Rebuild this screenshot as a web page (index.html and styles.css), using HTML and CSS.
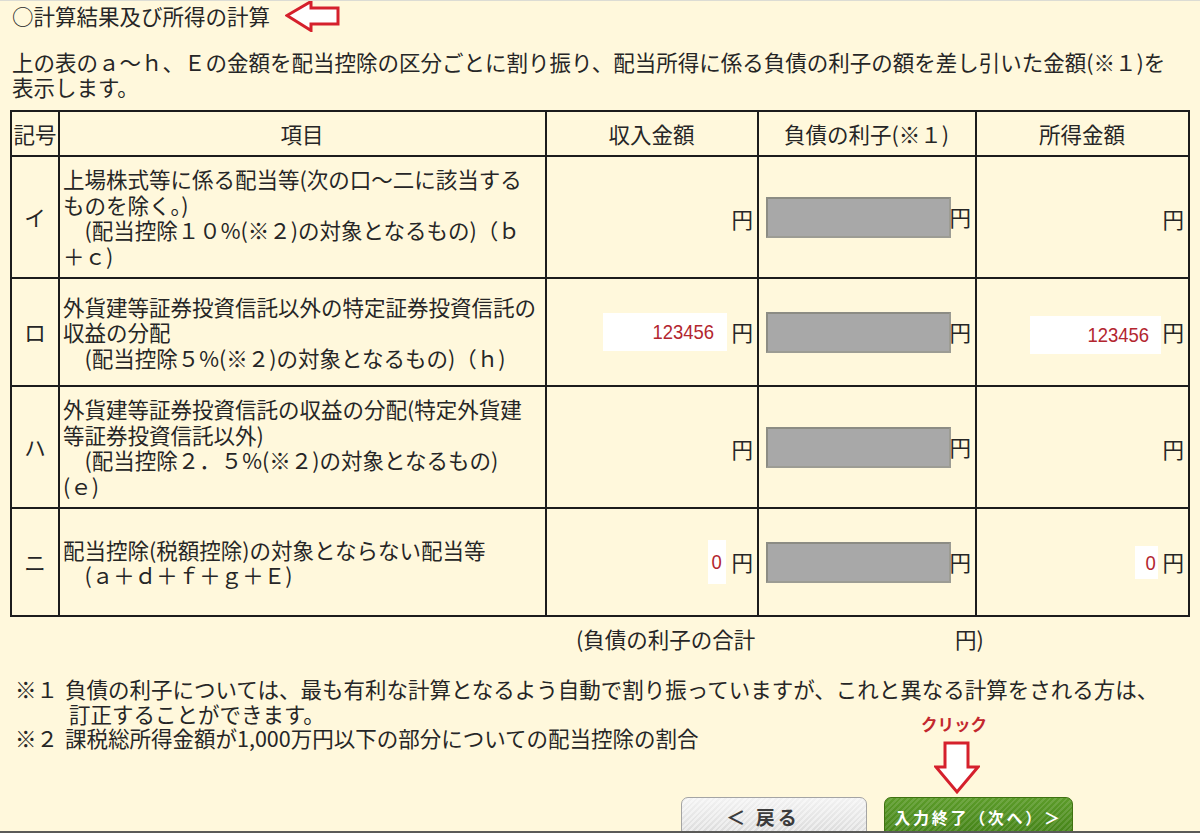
FILE: index.html
```html
<!DOCTYPE html>
<html lang="ja">
<head>
<meta charset="utf-8">
<title>計算結果及び所得の計算</title>
<link rel="stylesheet" href="styles.css">
</head>
<body>
<div class="page">
  <h1 class="title">
    <span>○計算結果及び所得の計算</span>
    <svg class="arrow-left" width="56" height="32" viewBox="0 0 56 32"><polygon points="2,15.5 26,1.5 26,8 53,8 53,24 26,24 26,30.5" fill="#fff" stroke="#d5202c" stroke-width="3" stroke-linejoin="miter"/></svg>
  </h1>
  <p class="lead">上の表のａ～ｈ、Ｅの金額を配当控除の区分ごとに割り振り、配当所得に係る負債の利子の額を差し引いた金額(※１)を<br>表示します。</p>

  <table class="calc">
    <colgroup>
      <col class="c-sym"><col class="c-item"><col class="c-inc"><col class="c-debt"><col class="c-net">
    </colgroup>
    <thead>
      <tr class="r-head">
        <th class="sym">記号</th>
        <th>項目</th>
        <th>収入金額</th>
        <th>負債の利子(※１)</th>
        <th>所得金額</th>
      </tr>
    </thead>
    <tbody>
      <tr class="r-a">
        <td class="sym">イ</td>
        <td class="item">上場株式等に係る配当等(次の口～二に該当する<br>ものを除く。)<br>　(配当控除１０%(※２)の対象となるもの)（ｂ<br>＋ｃ)</td>
        <td class="num"><span class="yen">円</span></td>
        <td class="num"><span class="gray"></span><span class="yen">円</span></td>
        <td class="num"><span class="yen">円</span></td>
      </tr>
      <tr class="r-b">
        <td class="sym">ロ</td>
        <td class="item">外貨建等証券投資信託以外の特定証券投資信託の<br>収益の分配<br>　(配当控除５%(※２)の対象となるもの)（ｈ)</td>
        <td class="num"><span class="val v-inc-b"><span class="digits">123456</span></span><span class="yen">円</span></td>
        <td class="num"><span class="gray"></span><span class="yen">円</span></td>
        <td class="num"><span class="val v-net-b"><span class="digits">123456</span></span><span class="yen">円</span></td>
      </tr>
      <tr class="r-c">
        <td class="sym">ハ</td>
        <td class="item">外貨建等証券投資信託の収益の分配(特定外貨建<br>等証券投資信託以外)<br>　(配当控除２．５%(※２)の対象となるもの)<br>(ｅ)</td>
        <td class="num"><span class="yen">円</span></td>
        <td class="num"><span class="gray"></span><span class="yen">円</span></td>
        <td class="num"><span class="yen">円</span></td>
      </tr>
      <tr class="r-d">
        <td class="sym">ニ</td>
        <td class="item">配当控除(税額控除)の対象とならない配当等<br>　(ａ＋ｄ＋ｆ＋ｇ＋Ｅ)</td>
        <td class="num"><span class="val v-inc-d"><span class="digits">0</span></span><span class="yen">円</span></td>
        <td class="num"><span class="gray"></span><span class="yen">円</span></td>
        <td class="num"><span class="val v-net-d"><span class="digits">0</span></span><span class="yen">円</span></td>
      </tr>
    </tbody>
  </table>

  <div class="sum">
    <span class="sum-label">(負債の利子の合計</span>
    <span>円)</span>
  </div>

  <div class="notes">
    <div class="note">
      <span class="mark">※１</span>
      <span class="note-text">負債の利子については、最も有利な計算となるよう自動で割り振っていますが、これと異なる計算をされる方は、<br><span class="cont">訂正することができます。</span></span>
    </div>
    <div class="note">
      <span class="mark">※２</span>
      <span class="note-text">課税総所得金額が1,000万円以下の部分についての配当控除の割合</span>
    </div>
  </div>

  <div class="buttons">
    <button class="btn btn-back" type="button">＜ 戻る</button>
    <button class="btn btn-next" type="button">入力終了（次へ）＞</button>
  </div>
</div>

<div class="click-note">クリック</div>
<svg class="arrow-down" width="46" height="54" viewBox="0 0 46 54"><polygon points="11,2 34,2 34,26 44,26 23,51 2,26 11,26" fill="#fff" stroke="#d5202c" stroke-width="3" stroke-linejoin="miter"/></svg>
<div class="bottom-edge"></div>
</body>
</html>
```

FILE: styles.css
```css
html, body {
  margin: 0;
  padding: 0;
}
body {
  position: relative;
  width: 1200px;
  height: 833px;
  overflow: hidden;
  background: #fff8dc;
  border-top: 1px solid #dcdcd4;
  box-sizing: border-box;
  color: #262626;
  font-family: "Noto Sans CJK JP", "Noto Sans", sans-serif;
  font-size: 21.5px;
}
.page {
  padding: 0 10px;
}
.title {
  display: flex;
  align-items: center;
  margin: 0;
  padding-left: 2px;
  font-size: 21.5px;
  font-weight: 400;
  line-height: 29px;
  height: 29px;
}
.arrow-left {
  display: block;
  margin: -1px 0 -2px 15px;
}
.lead {
  margin: 19px 0 0;
  padding-left: 2px;
  line-height: 25px;
}
.calc {
  margin-top: 11px;
  width: 1178px;
  table-layout: fixed;
  border-collapse: collapse;
  line-height: 25.5px;
}
.c-sym { width: 48px; }
.c-item { width: 487px; }
.c-inc { width: 212px; }
.c-debt { width: 218px; }
.c-net { width: 213px; }
.calc th, .calc td {
  border: 2px solid #1c1c1c;
  padding: 0 4px 0 3px;
  vertical-align: middle;
  white-space: nowrap;
  overflow: hidden;
}
.calc th {
  font-weight: 400;
  text-align: center;
}
.calc th.sym, .calc td.sym {
  padding: 0;
  text-align: center;
}
.r-head { height: 45px; }
.r-a { height: 122px; }
.r-b { height: 108px; }
.r-c { height: 122px; }
.r-d { height: 108px; }
.item {
  text-align: left;
}
.num {
  text-align: right;
}
.yen {
  display: inline-block;
  vertical-align: middle;
}
.gray {
  display: inline-block;
  vertical-align: middle;
  box-sizing: border-box;
  width: 185px;
  height: 41px;
  background: #a8a8a8;
  border: 2px solid #8c8c84;
  border-right-color: #9c9c94;
  border-bottom-color: #9c9c94;
  margin-right: -2px;
}
.val {
  display: inline-block;
  vertical-align: middle;
  box-sizing: border-box;
  background: #ffffff;
  color: #b3262f;
  font-family: "Liberation Sans", sans-serif;
  font-size: 21px;
  text-align: right;
}
.digits {
  display: inline-block;
  transform: scaleX(0.88);
  transform-origin: right center;
}
.v-inc-b {
  width: 124px;
  height: 38px;
  line-height: 38px;
  padding-right: 13px;
  margin-right: 4px;
}
.v-net-b {
  width: 131px;
  height: 38px;
  line-height: 38px;
  padding-right: 12px;
  margin-right: 1px;
  position: relative;
  top: 3px;
}
.v-inc-d {
  width: 18px;
  height: 44px;
  line-height: 44px;
  padding-right: 5px;
  margin-right: 5px;
}
.v-net-d {
  width: 23px;
  height: 33px;
  line-height: 33px;
  padding-right: 3px;
  margin-right: 4px;
}
.sum {
  display: flex;
  margin: 9px 0 0 566px;
  line-height: 25px;
}
.sum-label {
  width: 379px;
}
.notes {
  margin-top: 26px;
  padding-left: 5px;
  line-height: 24.5px;
}
.note {
  display: flex;
}
.mark {
  flex: none;
  width: 50px;
}
.cont {
  padding-left: 4px;
}
.buttons {
  display: flex;
  gap: 17px;
  margin: 46px 0 0 671px;
}
.btn {
  box-sizing: border-box;
  height: 46px;
  padding: 0 0 6px;
  border-radius: 7px;
  font-family: "Noto Sans CJK JP", sans-serif;
  font-weight: 700;
  line-height: 30px;
  display: block;
  cursor: pointer;
}
.btn-back {
  width: 186px;
  border: 1px solid #a4a4a4;
  color: #3c3c3c;
  font-size: 19px;
  letter-spacing: 3px;
  padding-right: 22px;
  background:
    repeating-linear-gradient(135deg, rgba(255,255,255,0.45) 0 2px, rgba(255,255,255,0) 2px 4px),
    linear-gradient(#f2f2f2, #d6d6d6);
}
.btn-next {
  width: 189px;
  border: 1px solid #3f7212;
  color: #ffffff;
  font-size: 16px;
  letter-spacing: 2.7px;
  background:
    repeating-linear-gradient(135deg, rgba(255,255,255,0.12) 0 2px, rgba(255,255,255,0) 2px 4px),
    linear-gradient(#5c9c2a, #3f7d14);
}
.click-note {
  position: absolute;
  left: 921px;
  top: 711px;
  color: #c3282e;
  font-weight: 700;
  font-size: 16.5px;
  line-height: 24px;
}
.arrow-down {
  position: absolute;
  left: 934px;
  top: 740px;
}
.bottom-edge {
  position: absolute;
  left: 0;
  right: 0;
  bottom: 0;
  height: 2px;
  background: #5a5a58;
}
```
